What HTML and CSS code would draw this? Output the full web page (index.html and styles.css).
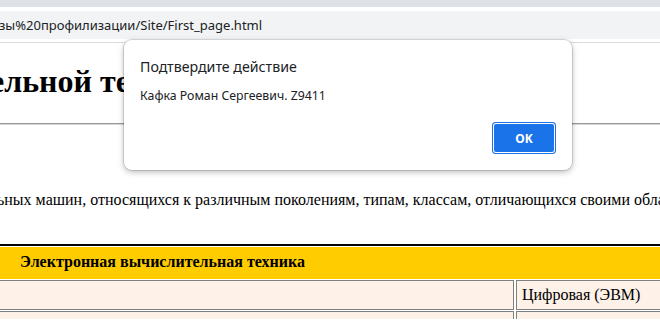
FILE: index.html
```html
<!DOCTYPE html>
<html lang="ru">
<head>
<meta charset="utf-8">
<title>First page</title>
<link rel="stylesheet" href="styles.css">
</head>
<body>
<div class="tabstrip"></div>
<div class="toolbar">
  <div class="omnibox"><span class="url">зы%20профилизации/Site/First_page.html</span></div>
</div>
<main class="page">
  <h1 class="title">ельной техники</h1>
  <hr class="rule">
  <p class="lead">ьных машин, относящихся к различным поколениям, типам, классам, отличающихся своими областями применения и характеристиками.</p>
  <table class="grid">
    <colgroup><col class="c1"><col class="c2"></colgroup>
    <tr><th class="head" colspan="2">Электронная вычислительная техника</th></tr>
    <tr><td class="cell"></td><td class="cell">Цифровая (ЭВМ)</td></tr>
    <tr><td class="cell"></td><td class="cell">Аналоговая (АВМ)</td></tr>
  </table>
</main>
<div class="dialog" role="dialog">
  <div class="dlg-title">Подтвердите действие</div>
  <div class="dlg-msg">Кафка Роман Сергеевич. Z9411</div>
  <button class="dlg-ok">OK</button>
</div>
</body>
</html>
```
FILE: styles.css
```css
html, body {
  margin: 0;
  padding: 0;
}
body {
  width: 660px;
  height: 320px;
  overflow: hidden;
  background: #fff;
  position: relative;
}
.tabstrip {
  height: 7px;
  background: #dee1e6;
}
.toolbar {
  height: 36px;
  padding-top: 4px;
  box-sizing: border-box;
  background: #fff;
  border-bottom: 1px solid #dadce0;
}
.omnibox {
  height: 28px;
  background: #f1f3f4;
  display: flex;
  align-items: center;
  overflow: hidden;
}
.url {
  font: 13px "Noto Sans", sans-serif;
  color: #202124;
  white-space: nowrap;
  margin-left: -1px;
}
.page {
  height: 276px;
  overflow: hidden;
}
.title {
  margin: 20px 0 0;
  font: bold 32px/37px "Liberation Serif", serif;
  color: #000;
  white-space: nowrap;
  text-indent: -10px;
}
.rule {
  margin: 23px 0 0;
  height: 0;
  border: 0;
  border-top: 1px solid #9a9a9a;
  border-bottom: 1px solid #d6d6d6;
}
.lead {
  margin: 66px 0 0;
  font: 16px/18px "Liberation Serif", serif;
  color: #000;
  white-space: nowrap;
  text-indent: -3px;
}
.grid {
  margin: 35px 0 0 -10px;
  border-collapse: separate;
  border-spacing: 2px 1px;
  border-top: 2px solid #000;
  table-layout: fixed;
  width: 1000px;
  font: 16px/18px "Liberation Serif", serif;
}
.c1 { width: 522px; }
.head {
  background: #ffcc00;
  padding: 6px 0 8px 28px;
  text-align: left;
  font-weight: bold;
}
.cell {
  background: #fdf1e8;
  border: 1px solid #808080;
  padding: 5px;
  height: 18px;
}
.dialog {
  position: absolute;
  left: 124px;
  top: 40px;
  width: 448px;
  height: 130px;
  box-sizing: border-box;
  padding: 17px 16px 16px;
  background: #fff;
  border-radius: 8px;
  box-shadow: 0 0 0 1px rgba(0,0,0,0.12), 0 2px 6px rgba(0,0,0,0.28);
  display: flex;
  flex-direction: column;
  font-family: "Noto Sans", sans-serif;
  color: #202124;
}
.dlg-title {
  font-size: 14.2px;
  line-height: 20px;
}
.dlg-msg {
  margin-top: 11px;
  font-size: 12.3px;
  line-height: 16px;
}
.dlg-ok {
  margin-top: auto;
  align-self: flex-end;
  width: 64px;
  height: 32px;
  border: 0;
  border-radius: 4px;
  background: #1a73e8;
  box-shadow: inset 0 0 0 1px #1a73e8, inset 0 0 0 2px #fff;
  color: #fff;
  font: bold 12px "Noto Sans", sans-serif;
  padding: 0;
}
```
